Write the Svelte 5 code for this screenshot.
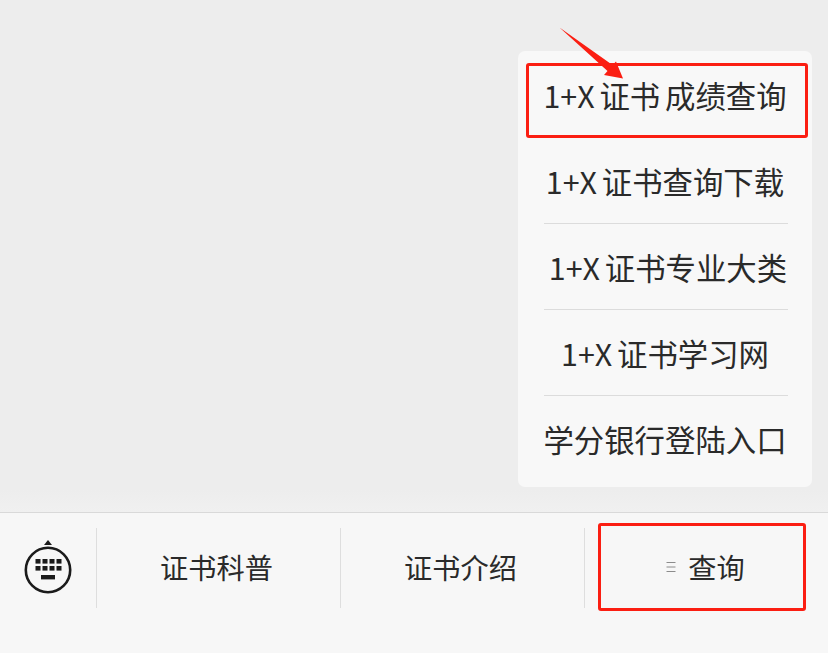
<script lang="ts">
	const menuItems = [
		{ label: '1+X 证书 成绩查询' },
		{ label: '1+X 证书查询下载' },
		{ label: '1+X 证书专业大类', shift: true },
		{ label: '1+X 证书学习网' },
		{ label: '学分银行登陆入口' }
	];
	const keyCols = [0, 1, 2, 3];
</script>

<div class="page">
	<main class="content">
		<div class="menu">
			{#each menuItems as item, i}
				<div class="menu-item" class:first={i === 0} class:shift={item.shift}>
					<span>{item.label}</span>
				</div>
			{/each}
		</div>
	</main>

	<nav class="bar">
		<div class="kb-cell">
			<svg width="50" height="58" viewBox="0 0 50 58">
				<path d="M25 2 L29 7 H21 Z" fill="#1b1b1b" />
				<circle cx="25" cy="32" r="22.2" fill="none" stroke="#1b1b1b" stroke-width="2.6" />
				{#each keyCols as c}
					<rect x={12.5 + c * 7} y="21" width="5" height="4.6" fill="#1b1b1b" />
					<rect x={12.5 + c * 7} y="28" width="5" height="4.6" fill="#1b1b1b" />
				{/each}
				<rect x="18" y="37" width="14" height="4.4" fill="#1b1b1b" />
			</svg>
		</div>
		<div class="tab">证书科普</div>
		<div class="tab">证书介绍</div>
		<div class="tab last">
			<svg width="10" height="12" viewBox="0 0 10 12" class="lines">
				<path d="M0.5 1.5 H9.5 M0.5 6 H9.5 M0.5 10.5 H9.5" stroke="#8c8c8c" stroke-width="1" fill="none" />
			</svg>
			<span>查询</span>
		</div>
	</nav>

	<!-- red annotations drawn over the screenshot -->
	<div class="mark mark-menu"></div>
	<div class="mark mark-tab"></div>
	<svg class="arrow" width="828" height="100" viewBox="0 0 828 100">
		<polygon points="559.5,27.5 612.5,65 616,61.5 623,78.5 604,75 607.5,71" fill="#fb1e12" />
	</svg>
</div>

<style>
	:global(body) {
		margin: 0;
		background: #ededed;
	}

	.page {
		position: relative;
		width: 828px;
		height: 653px;
		overflow: hidden;
		display: flex;
		flex-direction: column;
		font-family: 'Noto Sans CJK SC', 'Noto Sans', sans-serif;
		color: #2a2a2a;
	}

	.content {
		position: relative;
		flex: 1;
		background: linear-gradient(#ededed 0, #ededed 490px, #f0f0f0 512px);
	}

	.menu {
		position: absolute;
		left: 518px;
		top: 51px;
		width: 294px;
		box-sizing: border-box;
		padding: 0 24px 6px 26px;
		background: #f8f8f8;
		border-radius: 7px;
	}

	.menu-item {
		height: 86px;
		box-sizing: border-box;
		padding: 1px 2px 0 0;
		display: flex;
		align-items: center;
		justify-content: center;
		font-size: 30.4px;
		word-spacing: -2px;
		white-space: nowrap;
		border-top: 1px solid #dcdcdc;
	}

	.menu-item.first {
		border-top: none;
	}

	.menu-item.shift {
		padding-left: 6px;
	}

	.bar {
		height: 141px;
		box-sizing: border-box;
		border-top: 1px solid #d9d9d9;
		background: #f7f7f7;
		padding: 15px 0 45px;
		display: flex;
		font-size: 28.2px;
	}

	.kb-cell {
		width: 96px;
		flex: none;
		display: flex;
		justify-content: center;
		padding-top: 10px;
		box-sizing: border-box;
	}

	.tab {
		width: 244px;
		flex: none;
		box-sizing: border-box;
		border-left: 1px solid #dedede;
		display: flex;
		align-items: center;
		justify-content: center;
		padding: 0 4px 4px 0;
	}

	.tab.last {
		flex: 1;
		gap: 12px;
		padding: 0 2px 4px 0;
	}

	.lines {
		margin-top: 2px;
	}

	.mark {
		position: absolute;
		box-sizing: border-box;
		border: 3px solid #fb1e12;
		border-radius: 3px;
	}

	.mark-menu {
		left: 526px;
		top: 63px;
		width: 282px;
		height: 75px;
	}

	.mark-tab {
		left: 598px;
		top: 523px;
		width: 208px;
		height: 88px;
	}

	.arrow {
		position: absolute;
		left: 0;
		top: 0;
	}
</style>
